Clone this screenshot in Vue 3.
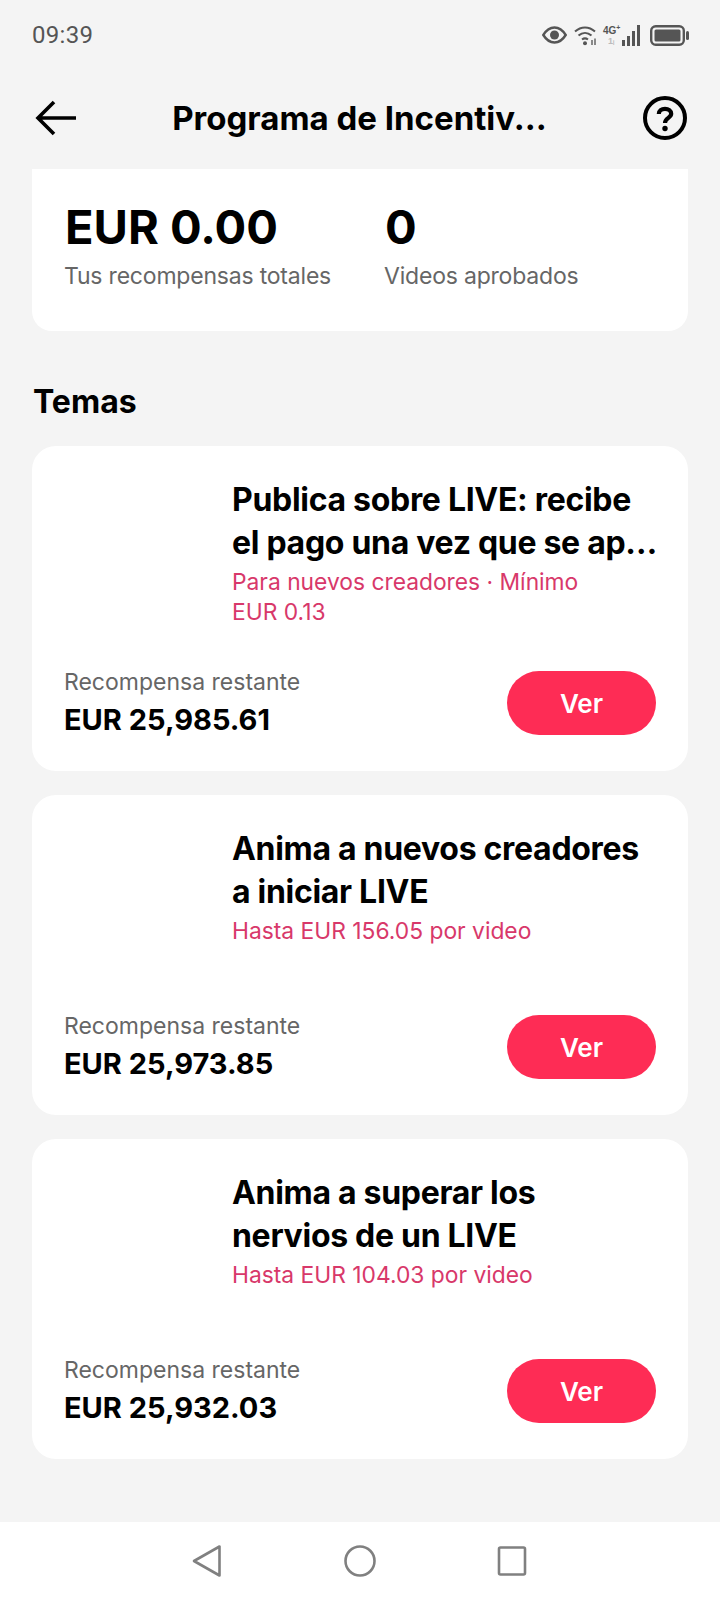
<template>
  <div class="screen">
    <div class="status">
      <span class="time">09:39</span>
      <div class="status-icons">
        <svg width="25" height="18" viewBox="0 0 25 18">
          <path d="M1.300 9C4.500 3.800 8 1.500 12.500 1.500S20.500 3.800 23.700 9C20.500 14.200 17 16.500 12.500 16.500S4.500 14.200 1.300 9Z" fill="none" stroke="#555" stroke-width="2.400" />
          <circle cx="12.500" cy="9" r="4.500" fill="#555" />
        </svg>
        <svg class="wifi" width="24" height="21" viewBox="0 0 24 21">
          <path d="M1 6.500C7 1 15 1 21 6.500M4.500 10.500C8.500 7 13.500 7 17.500 10.500M8 14.500C10 13 12 13 14 14.500" fill="none" stroke="#555" stroke-width="2" />
          <circle cx="11" cy="18.300" r="2" fill="#555" />
          <path d="M18 15v5M21 13.500v6.500" stroke="#666" stroke-width="1.500" />
        </svg>
        <div class="signal">
          <span class="net">4G<sup>+</sup></span>
          <span class="net-faint">1ᵢ</span>
          <i v-for="h in bars" :key="h" :style="{ height: h + 'px' }"></i>
        </div>
        <svg class="battery" width="39" height="21" viewBox="0 0 39 21">
          <rect x="1.200" y="1.200" width="32.600" height="18.600" rx="4.500" fill="none" stroke="#555" stroke-width="2.400" />
          <rect x="4.500" y="4.500" width="26" height="12" rx="1.500" fill="#555" />
          <rect x="36" y="6" width="3" height="9" rx="1.500" fill="#555" />
        </svg>
      </div>
    </div>

    <header class="head">
      <svg class="back" width="42" height="36" viewBox="0 0 42 36">
        <path d="M41 18H3M19 2 3 18l16 16" fill="none" stroke="#000" stroke-width="3.600" />
      </svg>
      <h1>Programa de Incentiv...</h1>
      <svg class="help" width="46" height="46" viewBox="0 0 46 46">
        <circle cx="23" cy="23" r="20" fill="none" stroke="#000" stroke-width="4" />
        <path d="M16.800 19C16.800 15.500 19.500 13.800 23 13.800S29.200 15.500 29.200 18.800C29.200 22.800 23 23 23 28" fill="none" stroke="#000" stroke-width="4.200" />
        <circle cx="23" cy="33.500" r="2.700" fill="#000" />
      </svg>
    </header>

    <section class="summary">
      <div class="stat first">
        <b>EUR 0.00</b>
        <span>Tus recompensas totales</span>
      </div>
      <div class="stat">
        <b>0</b>
        <span>Videos aprobados</span>
      </div>
    </section>

    <h2>Temas</h2>

    <article v-for="t in topics" :key="t.amount" class="topic">
      <div class="topic-top">
        <div class="thumb"></div>
        <div class="topic-text">
          <h3>{{ t.title[0] }}<br />{{ t.title[1] }}</h3>
          <p>{{ t.sub[0] }}<template v-if="t.sub[1]"><br />{{ t.sub[1] }}</template></p>
        </div>
      </div>
      <div class="topic-bottom">
        <div>
          <div class="rest">Recompensa restante</div>
          <div class="amount">{{ t.amount }}</div>
        </div>
        <button>Ver</button>
      </div>
    </article>

    <nav class="navbar">
      <svg width="34" height="34" viewBox="0 0 34 34">
        <path d="M28.500 2.500V31.500L3 17Z" fill="none" stroke="#808080" stroke-width="2.600" stroke-linejoin="round" />
      </svg>
      <svg width="34" height="34" viewBox="0 0 34 34">
        <circle cx="17" cy="17" r="14.500" fill="none" stroke="#808080" stroke-width="2.600" />
      </svg>
      <svg width="34" height="34" viewBox="0 0 34 34">
        <rect x="4" y="3.500" width="26" height="27" rx="1.500" fill="none" stroke="#808080" stroke-width="2.600" />
      </svg>
    </nav>
  </div>
</template>

<script setup>
const bars = [6, 10, 15, 21];

const topics = [
  {
    title: ["Publica sobre LIVE: recibe", "el pago una vez que se ap…"],
    sub: ["Para nuevos creadores · Mínimo", "EUR 0.13"],
    amount: "EUR 25,985.61",
  },
  {
    title: ["Anima a nuevos creadores", "a iniciar LIVE"],
    sub: ["Hasta EUR 156.05 por video"],
    amount: "EUR 25,973.85",
  },
  {
    title: ["Anima a superar los", "nervios de un LIVE"],
    sub: ["Hasta EUR 104.03 por video"],
    amount: "EUR 25,932.03",
  },
];
</script>

<style>
body {
  background: #f4f4f4;
}
</style>

<style scoped>
.screen {
  width: 720px;
  height: 1600px;
  background: #f4f4f4;
  font-family: Inter, "Liberation Sans", sans-serif;
  color: #000;
  display: flex;
  flex-direction: column;
  overflow: hidden;
}

.screen > * {
  flex: none;
}

.status {
  height: 70px;
  padding: 0 31px 0 32px;
  display: flex;
  align-items: center;
  justify-content: space-between;
  color: #555;
  box-sizing: border-box;
}

.time {
  font-family: Roboto, sans-serif;
  font-size: 24px;
  letter-spacing: 0.3px;
}

.status-icons {
  display: flex;
  align-items: center;
}

.wifi {
  margin-left: 7px;
}

.signal {
  width: 37px;
  height: 21px;
  margin-left: 5px;
  position: relative;
  display: flex;
  align-items: flex-end;
  justify-content: flex-end;
  gap: 2px;
}

.signal i {
  width: 3px;
  background: #555;
}

.net {
  position: absolute;
  left: 0;
  top: 0;
  font: 700 10px "Liberation Sans", sans-serif;
}

.net sup {
  font-size: 7px;
  line-height: 0;
}

.net-faint {
  position: absolute;
  left: 5px;
  bottom: 0;
  font: 700 9px "Liberation Sans", sans-serif;
  color: #bbb;
}

.battery {
  margin-left: 10px;
}

.head {
  height: 99px;
  padding: 0 32px 3px 35px;
  box-sizing: border-box;
  display: flex;
  align-items: center;
  justify-content: space-between;
}

.head h1 {
  margin: 0;
  font-size: 33px;
  font-weight: 700;
}

.summary {
  margin: 0 32px;
  height: 162px;
  background: #fff;
  border-radius: 0 0 20px 20px;
  padding: 30px 33px 0;
  box-sizing: border-box;
  display: flex;
  gap: 55px;
}

.stat b {
  display: block;
  font-size: 47px;
  line-height: 56px;
  font-weight: 700;
}

.stat span {
  display: block;
  margin: 6px 0 0 -1px;
  font-size: 23px;
  line-height: 30px;
  letter-spacing: -0.2px;
  color: #666;
  white-space: nowrap;
}

.stat.first {
  width: 265px;
}

h2 {
  margin: 0;
  padding: 51px 0 0 33px;
  height: 115px;
  box-sizing: border-box;
  font-size: 32px;
  line-height: 40px;
  font-weight: 700;
}

.topic {
  margin: 0 32px 24px;
  padding: 33px 32px 32px;
  background: #fff;
  border-radius: 24px;
}

.topic-top {
  display: flex;
  min-height: 143px;
  margin-bottom: 40px;
}

.thumb {
  width: 168px;
  flex: none;
}

.topic-text h3 {
  margin: 0 0 3px;
  font-size: 32px;
  line-height: 42.500px;
  font-weight: 700;
  letter-spacing: -0.3px;
  white-space: nowrap;
}

.topic-text p {
  margin: 0;
  font-size: 22.800px;
  line-height: 30px;
  color: #d8386a;
}

.topic-bottom {
  display: flex;
  align-items: center;
  justify-content: space-between;
}

.rest {
  font-size: 23px;
  line-height: 30px;
  color: #666;
}

.amount {
  margin-top: 4px;
  font-size: 29px;
  line-height: 38px;
  font-weight: 700;
}

button {
  width: 149px;
  height: 64px;
  border: 0;
  border-radius: 32px;
  background: #fe2c55;
  color: #fff;
  font-family: inherit;
  font-size: 26px;
  font-weight: 600;
}

.navbar {
  margin-top: auto;
  height: 78px;
  background: #fff;
  display: grid;
  grid-template-columns: repeat(3, 34px);
  justify-content: center;
  gap: 118px;
  align-items: center;
}
</style>
